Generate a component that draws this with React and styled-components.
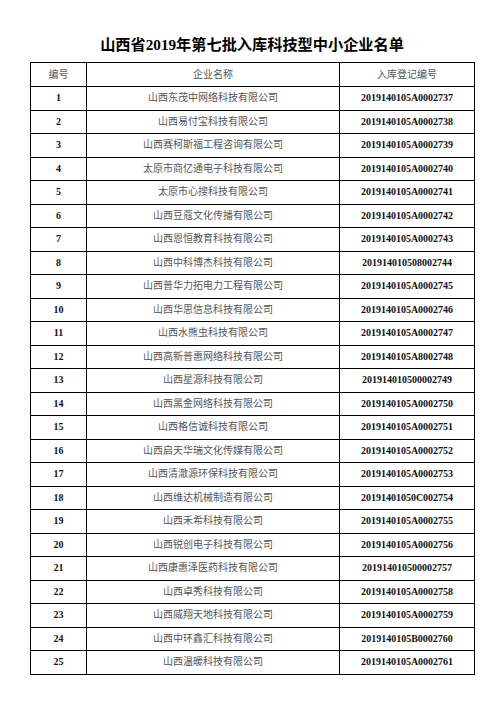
import React from 'react';
import styled, { createGlobalStyle } from 'styled-components';

const rows = [
  ['1', '山西东茂中网络科技有限公司', '2019140105A0002737'],
  ['2', '山西易付宝科技有限公司', '2019140105A0002738'],
  ['3', '山西赛柯斯福工程咨询有限公司', '2019140105A0002739'],
  ['4', '太原市商亿通电子科技有限公司', '2019140105A0002740'],
  ['5', '太原市心搜科技有限公司', '2019140105A0002741'],
  ['6', '山西豆蔻文化传播有限公司', '2019140105A0002742'],
  ['7', '山西恩恒教育科技有限公司', '2019140105A0002743'],
  ['8', '山西中科博杰科技有限公司', '201914010508002744'],
  ['9', '山西普华力拓电力工程有限公司', '2019140105A0002745'],
  ['10', '山西华思信息科技有限公司', '2019140105A0002746'],
  ['11', '山西水熊虫科技有限公司', '2019140105A0002747'],
  ['12', '山西高新普惠网络科技有限公司', '2019140105A8002748'],
  ['13', '山西星源科技有限公司', '201914010500002749'],
  ['14', '山西黑金网络科技有限公司', '2019140105A0002750'],
  ['15', '山西格信诚科技有限公司', '2019140105A0002751'],
  ['16', '山西启天华瑞文化传媒有限公司', '2019140105A0002752'],
  ['17', '山西清澈源环保科技有限公司', '2019140105A0002753'],
  ['18', '山西维达机械制造有限公司', '20191401050C002754'],
  ['19', '山西禾希科技有限公司', '2019140105A0002755'],
  ['20', '山西锐创电子科技有限公司', '2019140105A0002756'],
  ['21', '山西康惠泽医药科技有限公司', '201914010500002757'],
  ['22', '山西卓秀科技有限公司', '2019140105A0002758'],
  ['23', '山西威翔天地科技有限公司', '2019140105A0002759'],
  ['24', '山西中环鑫汇科技有限公司', '2019140105B0002760'],
  ['25', '山西温暖科技有限公司', '2019140105A0002761'],
];

const Global = createGlobalStyle`
  html, body {
    margin: 0;
    background: #fff;
  }
  body {
    font-family: "Liberation Serif", "Noto Sans CJK SC", serif;
  }
`;

const Page = styled.div`
  width: 504px;
  height: 713px;
  padding-top: 35px;
  box-sizing: border-box;
`;

const Title = styled.h1`
  margin: 0 0 7px;
  font-size: 15.2px;
  line-height: 20px;
  font-weight: 700;
  color: #000;
  text-align: center;
`;

const Table = styled.table`
  margin-left: 30px;
  width: 444px;
  border-collapse: collapse;
  table-layout: fixed;
  border: 1px solid #000;
`;

const Row = styled.tr`
  height: ${(p) => (p.$head ? '24px' : '23.5px')};
`;

const Cell = styled.td`
  border: 1px solid #000;
  padding: 0;
  text-align: center;
  vertical-align: middle;
  font-size: 10px;
  line-height: 12px;
  white-space: nowrap;
  color: ${(p) => (p.$bold ? '#111' : '#555')};
  font-weight: ${(p) => (p.$bold ? 700 : 400)};
`;

export default function App() {
  return (
    <Page>
      <Global />
      <Title>山西省2019年第七批入库科技型中小企业名单</Title>
      <Table>
        <colgroup>
          <col style={{ width: 56 }} />
          <col style={{ width: 253 }} />
          <col style={{ width: 135 }} />
        </colgroup>
        <tbody>
          <Row $head>
            <Cell>编号</Cell>
            <Cell>企业名称</Cell>
            <Cell>入库登记编号</Cell>
          </Row>
          {rows.map((r) => (
            <Row key={r[0]}>
              <Cell $bold>{r[0]}</Cell>
              <Cell>{r[1]}</Cell>
              <Cell $bold>{r[2]}</Cell>
            </Row>
          ))}
        </tbody>
      </Table>
    </Page>
  );
}
